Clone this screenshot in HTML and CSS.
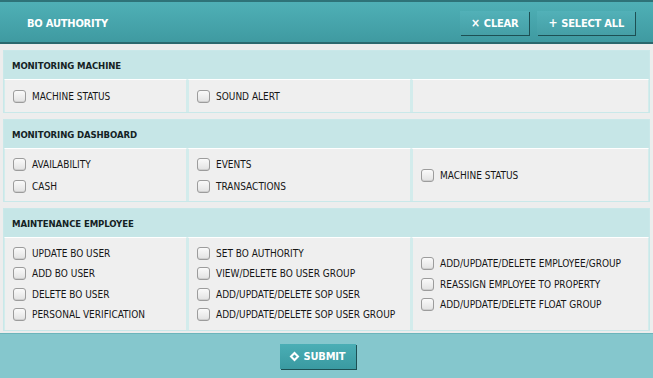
FILE: index.html
```html
<!DOCTYPE html>
<html>
<head>
<meta charset="utf-8">
<link rel="stylesheet" href="styles.css">
</head>
<body>
<div class="panel">
  <div class="topbar">
    <div class="title">BO AUTHORITY</div>
    <div class="actions">
      <button class="btn"><span class="ico">×</span>CLEAR</button>
      <button class="btn"><span class="ico">+</span>SELECT ALL</button>
    </div>
  </div>
  <div class="content">
    <div class="section">
      <div class="sec-head">MONITORING MACHINE</div>
      <div class="grid g1">
        <div class="cell"><label class="item"><span class="cb"></span>MACHINE STATUS</label></div>
        <div class="cell"><label class="item"><span class="cb"></span>SOUND ALERT</label></div>
        <div class="cell"></div>
      </div>
    </div>
    <div class="section">
      <div class="sec-head">MONITORING DASHBOARD</div>
      <div class="grid g2">
        <div class="cell"><label class="item"><span class="cb"></span>AVAILABILITY</label><label class="item"><span class="cb"></span>CASH</label></div>
        <div class="cell"><label class="item"><span class="cb"></span>EVENTS</label><label class="item"><span class="cb"></span>TRANSACTIONS</label></div>
        <div class="cell center"><label class="item"><span class="cb"></span>MACHINE STATUS</label></div>
      </div>
    </div>
    <div class="section">
      <div class="sec-head">MAINTENANCE EMPLOYEE</div>
      <div class="grid g3">
        <div class="cell"><label class="item"><span class="cb"></span>UPDATE BO USER</label><label class="item"><span class="cb"></span>ADD BO USER</label><label class="item"><span class="cb"></span>DELETE BO USER</label><label class="item"><span class="cb"></span>PERSONAL VERIFICATION</label></div>
        <div class="cell"><label class="item"><span class="cb"></span>SET BO AUTHORITY</label><label class="item"><span class="cb"></span>VIEW/DELETE BO USER GROUP</label><label class="item"><span class="cb"></span>ADD/UPDATE/DELETE SOP USER</label><label class="item"><span class="cb"></span>ADD/UPDATE/DELETE SOP USER GROUP</label></div>
        <div class="cell center"><label class="item"><span class="cb"></span>ADD/UPDATE/DELETE EMPLOYEE/GROUP</label><label class="item"><span class="cb"></span>REASSIGN EMPLOYEE TO PROPERTY</label><label class="item"><span class="cb"></span>ADD/UPDATE/DELETE FLOAT GROUP</label></div>
      </div>
    </div>
  </div>
  <div class="footer">
    <button class="btn submit"><span class="diamond"></span>SUBMIT</button>
  </div>
</div>
</body>
</html>
```
FILE: styles.css
```css
* { box-sizing: border-box; }
html, body { margin: 0; padding: 0; }
body {
  width: 653px;
  height: 378px;
  overflow: hidden;
  font-family: "DejaVu Sans Condensed", "DejaVu Sans", sans-serif;
  background: #85c7cd;
}
.panel { display: flex; flex-direction: column; height: 378px; }
.topbar {
  height: 44px;
  display: flex;
  align-items: center;
  justify-content: space-between;
  padding: 2px 18px 0 27px;
  background: linear-gradient(#4fb0b6, #3f9aa1);
  border-top: 2px solid #2e7378;
  border-bottom: 2px solid #2b686d;
  box-shadow: 0 1px 0 #9fd3d6;
}
.title {
  color: #fff;
  font-weight: bold;
  font-size: 11px;
  letter-spacing: -0.2px;
}
.actions { display: flex; gap: 8px; }
.btn {
  font-family: inherit;
  font-weight: bold;
  color: #fff;
  font-size: 11px;
  letter-spacing: -0.2px;
  height: 24px;
  padding: 0 11px;
  border: none;
  background: linear-gradient(#52b1b8, #459fa6);
  box-shadow: 1px 1px 0 #1d4f53;
  display: flex;
  align-items: center;
  gap: 4px;
  cursor: pointer;
}
.ico { font-size: 12px; }
.content {
  flex: 1;
  background: #ededed;
  padding: 6px 3px 2px 3px;
  display: flex;
  flex-direction: column;
  gap: 6px;
}
.section {
  border: 1px solid #c9e8e9;
  background: #ededed;
}
.sec-head {
  background: #c6e6e7;
  height: 28px;
  display: flex;
  align-items: center;
  padding-left: 8px;
  font-size: 9.5px;
  letter-spacing: -0.1px;
  font-weight: bold;
  color: #142224;
}
.grid {
  display: grid;
  grid-template-columns: 183px 224px 1fr;
  background: #ededed;
}
.cell {
  border-left: 1px solid #d3ecec;
  border-right: 1px solid #d3ecec;
  border-top: 1px solid #ffffff;
  background: #efefef;
  padding: 0 8px;
  display: flex;
  flex-direction: column;
  justify-content: center;
}
.cell + .cell { border-left: 2px solid #d3ecec; }
.g1 .cell { height: 33px; }
.g2 .cell { height: 53px; gap: 8px; }
.g3 .cell { height: 93px; gap: 6.3px; }
.item {
  display: flex;
  align-items: center;
  gap: 6px;
  font-size: 10px;
  color: #151515;
  height: 14px;
  white-space: nowrap;
}
.cb {
  width: 13px;
  height: 13px;
  border: 1px solid #9c9c9c;
  border-radius: 3px;
  background: linear-gradient(#fafafa, #e2e2e2);
  box-shadow: inset 0 -1px 0 #cfcfcf;
  flex: none;
}
.footer {
  flex: none;
  height: 45px;
  background: #85c7cd;
  border-top: 1px solid #6bb5bb;
  display: flex;
  justify-content: center;
  align-items: center;
}
.submit {
  height: 25px;
  padding: 0 11px;
  background: linear-gradient(#4aaeb5, #3a9aa1);
  box-shadow: 1px 1px 0 #1d4f53;
  margin-left: -17px;
}
.diamond {
  width: 7px;
  height: 7px;
  border: 2px solid #fff;
  transform: rotate(45deg);
  margin-right: 2px;
}
```
